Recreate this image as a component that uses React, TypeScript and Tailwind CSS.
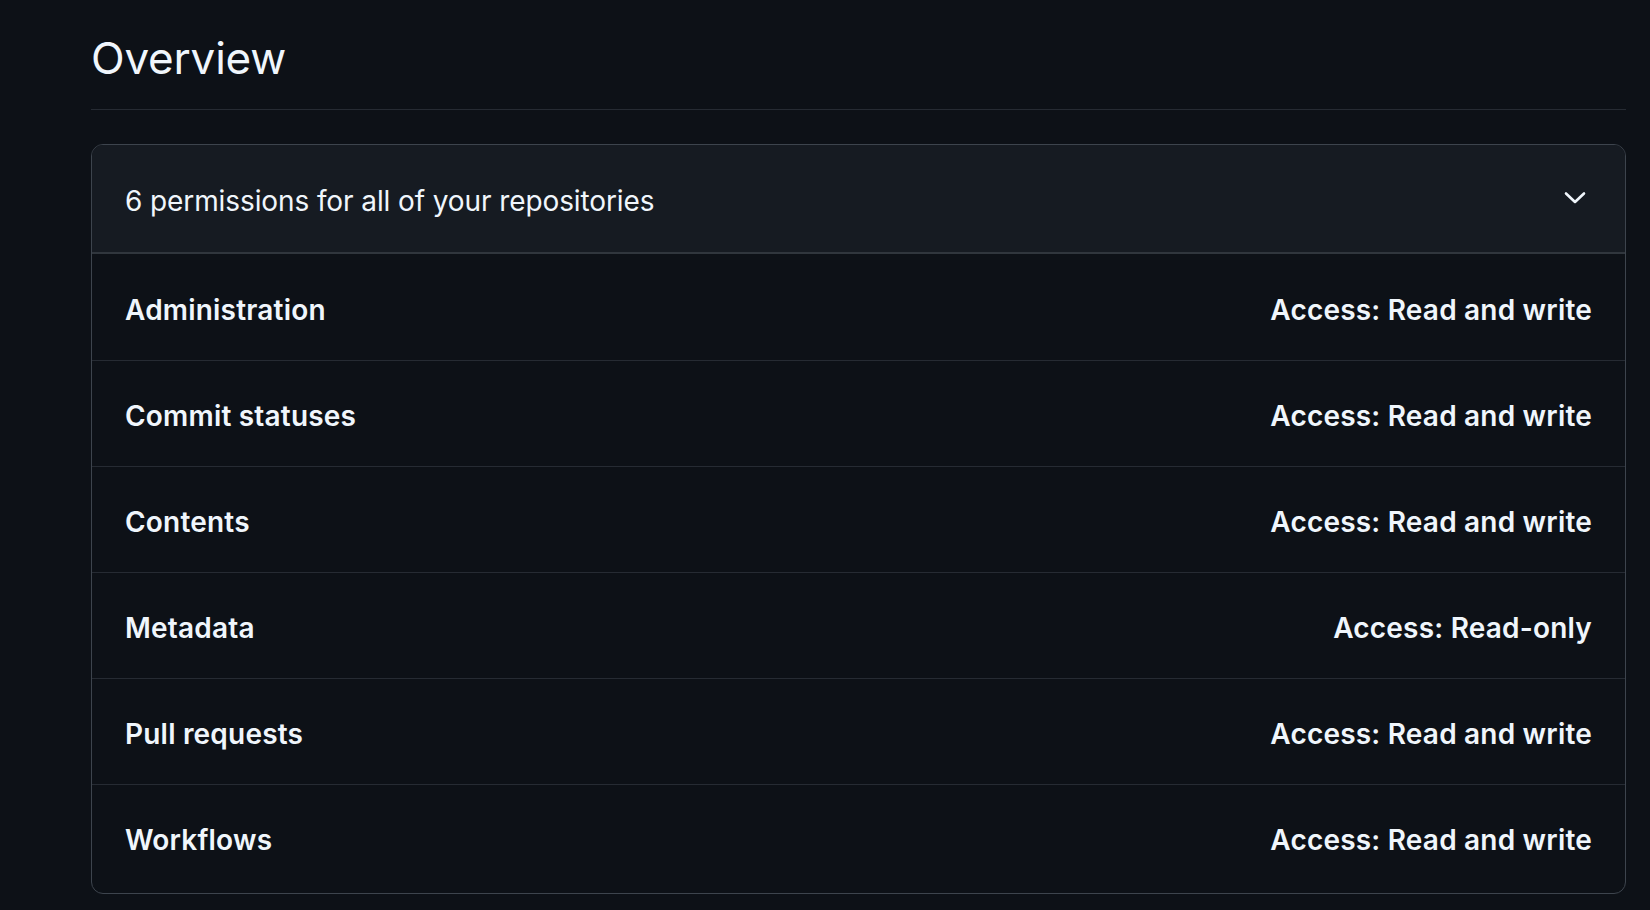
const permissions = [
  { name: "Administration", access: "Read and write" },
  { name: "Commit statuses", access: "Read and write" },
  { name: "Contents", access: "Read and write" },
  { name: "Metadata", access: "Read-only" },
  { name: "Pull requests", access: "Read and write" },
  { name: "Workflows", access: "Read and write" },
];

function Chevron() {
  return (
    <svg width="22" height="14" viewBox="0 0 22 14" fill="none" className="-mt-[5px]">
      <path
        d="M2 2.5 L11 11 L20 2.5"
        stroke="#f0f6fc"
        strokeWidth="2.6"
        strokeLinecap="round"
        strokeLinejoin="round"
      />
    </svg>
  );
}

export default function App() {
  return (
    <div
      className="min-h-screen bg-[#0d1117] pl-[91px] pr-[24px] pt-[30px] text-[#f0f6fc]"
      style={{ fontFamily: "Inter, 'Noto Sans', sans-serif" }}
    >
      <h2 className="border-b border-[#262b33] pb-[22px] text-[44px] font-normal leading-[57px] tracking-[-0.2px]">
        Overview
      </h2>

      <div className="mt-[34px] overflow-hidden rounded-[12px] border border-[#3d444d]">
        {/* 헤더 */}
        <div className="flex h-[109px] items-center justify-between border-b-2 border-[#30363d] bg-[#161b22] pl-[33px] pr-[39px] pt-[4px]">
          <span className="text-[28px] font-normal tracking-[-0.1px]">
            6 permissions for all of your repositories
          </span>
          <Chevron />
        </div>

        {permissions.map((p, i) => (
          <div
            key={p.name}
            className={
              i === 0
                ? "flex h-[107px] items-center justify-between border-b border-[#262b33] px-[33px] pt-[5px] text-[28px] font-semibold tracking-[0.2px]"
                : i < permissions.length - 1
                  ? "flex h-[106px] items-center justify-between border-b border-[#262b33] px-[33px] pt-[5px] text-[28px] font-semibold tracking-[0.2px]"
                  : "flex h-[108px] items-center justify-between px-[33px] pt-[2px] text-[28px] font-semibold tracking-[0.2px]"
            }
          >
            <span>{p.name}</span>
            <span>Access: {p.access}</span>
          </div>
        ))}
      </div>
    </div>
  );
}
